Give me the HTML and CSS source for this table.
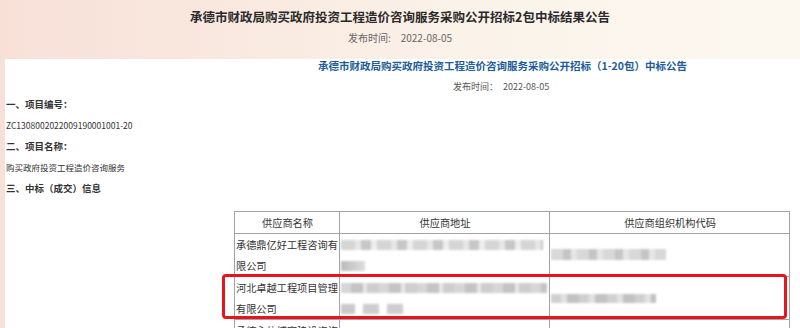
FILE: index.html
```html
<!DOCTYPE html>
<html lang="zh-CN">
<head>
<meta charset="utf-8">
<link rel="stylesheet" href="styles.css">
</head>
<body>
<header class="page-head">
  <h1 class="page-title">承德市财政局购买政府投资工程造价咨询服务采购公开招标2包中标结果公告</h1>
  <div class="page-date"><span class="lbl">发布时间:</span><span class="val">2022-08-05</span></div>
</header>
<main class="panel">
  <h2 class="doc-title">承德市财政局购买政府投资工程造价咨询服务采购公开招标（1-20包）中标公告</h2>
  <div class="doc-date"><span class="lbl">发布时间：</span><span class="val">2022-08-05</span></div>
  <div class="sections">
    <p class="sec-h">一、项目编号：</p>
    <p class="sec-t">ZC1308002022009190001001-20</p>
    <p class="sec-h">二、项目名称：</p>
    <p class="sec-t">购买政府投资工程造价咨询服务</p>
    <p class="sec-h">三、中标（成交）信息</p>
  </div>
  <div class="table-wrap">
    <table class="result">
      <colgroup><col class="c1"><col class="c2"><col class="c3"></colgroup>
      <thead>
        <tr><th>供应商名称</th><th>供应商地址</th><th>供应商组织机构代码</th></tr>
      </thead>
      <tbody>
        <tr>
          <td>承德鼎亿好工程咨询有限公司</td>
          <td class="addr"><div class="ln"><span class="blur b-long"></span></div><div class="ln"><span class="blur b-s1"></span></div></td>
          <td class="code"><span class="blur b-code"></span></td>
        </tr>
        <tr>
          <td>河北卓越工程项目管理有限公司</td>
          <td class="addr"><div class="ln"><span class="blur b-long2"></span></div><div class="ln"><span class="blur b-s2"></span><span class="blur b-s3"></span><span class="blur b-s3"></span></div></td>
          <td class="code"><span class="blur b-code2"></span></td>
        </tr>
        <tr>
          <td>承德永信博宇建设咨询有限公司</td>
          <td>河北省承德市围场县御道口镇东大街南侧大公</td>
          <td></td>
        </tr>
      </tbody>
    </table>
    <div class="highlight"></div>
  </div>
</main>
</body>
</html>
```
FILE: styles.css
```css
html, body {
  margin: 0;
  padding: 0;
}
body {
  width: 800px;
  height: 328px;
  overflow: hidden;
  font-family: "Noto Sans CJK SC", "Noto Sans", sans-serif;
  background: linear-gradient(90deg, #f8e0d7 0%, #f9e9e0 30%, #fbf3ea 60%, #fcf8f0 100%);
}
.page-head {
  text-align: center;
  padding-top: 7px;
}
.page-title {
  margin: 0;
  font-size: 12.5px;
  line-height: 20px;
  font-weight: 700;
  color: #2a2a2a;
}
.page-date {
  margin-top: 3px;
  font-size: 10px;
  line-height: 16px;
  color: #666;
}
.page-date .lbl { margin-right: 10px; }

.panel {
  margin: 13px 0 0 5px;
  background: #fff;
  height: 300px;
}
.doc-title {
  margin: 0;
  padding-left: 313px;
  font-size: 10.5px;
  line-height: 14px;
  font-weight: 700;
  color: #1d5c98;
}
.doc-date {
  margin-top: 7px;
  padding-left: 448px;
  font-size: 9px;
  line-height: 14px;
  color: #555;
}
.doc-date .lbl { margin-right: 5px; }

.sections p {
  margin: 0;
  line-height: 21px;
  color: #333;
}
.sec-h {
  font-size: 9.5px;
  font-weight: 700;
  padding-left: 1px;
}
.sec-t {
  font-size: 8.5px;
  padding-left: 1px;
}

.table-wrap {
  position: relative;
  margin: 12px 0 0 229px;
  width: 555px;
}
.result {
  border-collapse: collapse;
  table-layout: fixed;
  width: 555px;
  font-size: 10.2px;
  color: #333;
}
.result col.c1 { width: 105px; }
.result col.c2 { width: 210px; }
.result col.c3 { width: 240px; }
.result th, .result td {
  border: 1px solid #a3a3a3;
  padding: 0 0 0 1px;
  line-height: 21px;
}
.result th {
  font-weight: 400;
  text-align: center;
  height: 20px;
}
.result td {
  vertical-align: middle;
  word-break: break-all;
}
.ln {
  height: 21px;
  display: flex;
  align-items: center;
  gap: 8px;
}
.blur {
  display: inline-block;
  height: 10px;
  filter: blur(1.2px);
  opacity: 0.7;
}
.b-long {
  width: 202px;
  background: repeating-linear-gradient(90deg, #c4c4c4 0 14px, #dcdcdc 14px 20px, #b0b0b0 20px 30px, #e6e6e6 30px 36px);
}
.b-long2 {
  width: 206px;
  background: repeating-linear-gradient(90deg, #c6c6c6 0 10px, #acacac 10px 22px, #dedede 22px 26px, #bababa 26px 38px);
}
.b-s1 {
  width: 24px;
  background: linear-gradient(90deg, #9c9c9c, #d2d2d2);
}
.b-s2 {
  width: 14px;
  background: #b4b4b4;
}
.b-s3 {
  width: 16px;
  background: #bababa;
}
.code { padding-left: 1px; }
.b-code {
  width: 115px;
  height: 11px;
  background: repeating-linear-gradient(90deg, #c8c8c8 0 12px, #adadad 12px 20px, #dcdcdc 20px 26px);
}
.b-code2 {
  width: 105px;
  height: 9px;
  background: repeating-linear-gradient(90deg, #bdbdbd 0 10px, #d6d6d6 10px 16px, #a9a9a9 16px 28px);
}
.highlight {
  position: absolute;
  left: -12px;
  top: 63px;
  width: 559px;
  height: 39px;
  border: 3px solid #e8141b;
  border-radius: 4px;
  pointer-events: none;
}
```
